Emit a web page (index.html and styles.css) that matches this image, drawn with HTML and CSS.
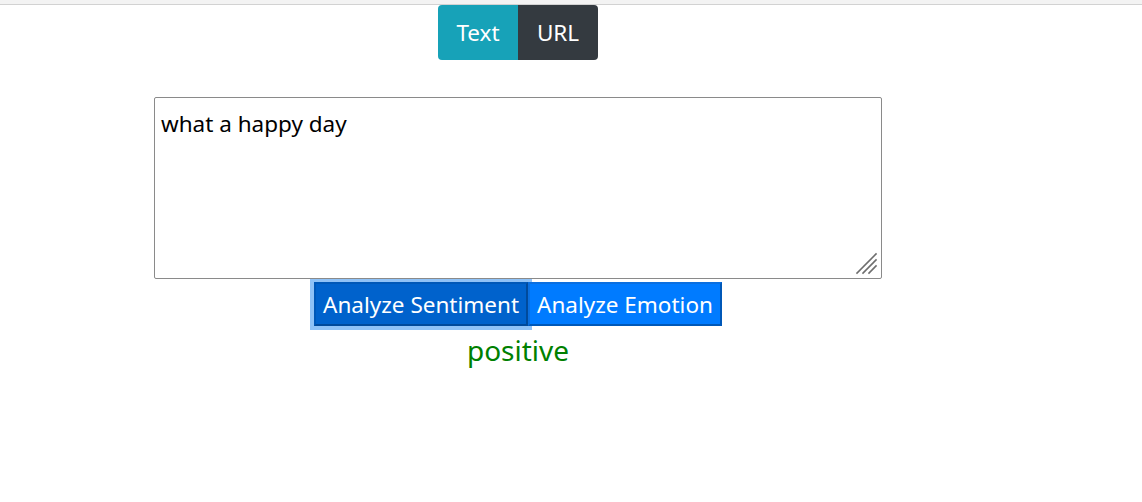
FILE: index.html
```html
<!DOCTYPE html>
<html>
<head>
<meta charset="utf-8">
<link rel="stylesheet" href="styles.css">
</head>
<body>
<div class="topbar"></div>
<div class="page">
  <div class="tabs">
    <button class="tab tab-text">Text</button>
    <button class="tab tab-url">URL</button>
  </div>
  <div class="input-wrap">
    <textarea class="input">what a happy day</textarea>
    <svg class="grip" width="24" height="24" viewBox="0 0 24 24">
      <g stroke="#6e6e6e" stroke-width="1.6" stroke-linecap="square">
        <line x1="3" y1="22" x2="22" y2="3"/>
        <line x1="9" y1="22" x2="22" y2="9"/>
        <line x1="15" y1="22" x2="22" y2="15"/>
      </g>
    </svg>
  </div>
  <div class="actions">
    <button class="act act-active">Analyze Sentiment</button>
    <button class="act">Analyze Emotion</button>
  </div>
  <div class="result">positive</div>
</div>
</body>
</html>
```
FILE: styles.css
```css
html, body {
  margin: 0;
  padding: 0;
  background: #fff;
  font-family: "Noto Sans", "Open Sans", sans-serif;
}
.topbar {
  height: 4px;
  background: #f3f3f3;
  border-bottom: 1px solid #d2d2d2;
}
.page {
  width: 1036px;
  display: flex;
  flex-direction: column;
  align-items: center;
}
.tabs {
  display: flex;
}
.tab {
  font-family: inherit;
  font-size: 22.5px;
  color: #fff;
  border: none;
  height: 55px;
  width: 80px;
  padding: 0;
  margin: 0;
}
.tab-text {
  background: #17a2b8;
  border-radius: 4px 0 0 4px;
}
.tab-url {
  background: #343a40;
  border-radius: 0 4px 4px 0;
}
.input-wrap {
  position: relative;
  margin-top: 37px;
  display: flex;
}
.input {
  width: 728px;
  height: 182px;
  box-sizing: border-box;
  border: 1px solid #8a8a8a;
  border-radius: 2px;
  padding: 10px 6px 8px;
  font-family: inherit;
  font-size: 22.5px;
  color: #000;
  resize: none;
  margin: 0;
}
.grip {
  position: absolute;
  right: 4px;
  bottom: 4px;
}
.actions {
  display: flex;
  align-items: center;
  margin-top: 3px;
}
.act {
  font-family: inherit;
  font-size: 22.5px;
  color: #fff;
  background: #007bff;
  border: 2px solid;
  border-color: #0a6fe0 #0058b8 #0058b8 #0a6fe0;
  height: 44px;
  padding: 0 7px;
  margin: 0;
}
.act-active {
  background: #0062cc;
  border-color: #0058b8 #004a9c #004a9c #0058b8;
  outline: 4px solid #8fc2f7;
}
.result {
  margin-top: 5px;
  color: #008000;
  font-size: 28px;
}
```
